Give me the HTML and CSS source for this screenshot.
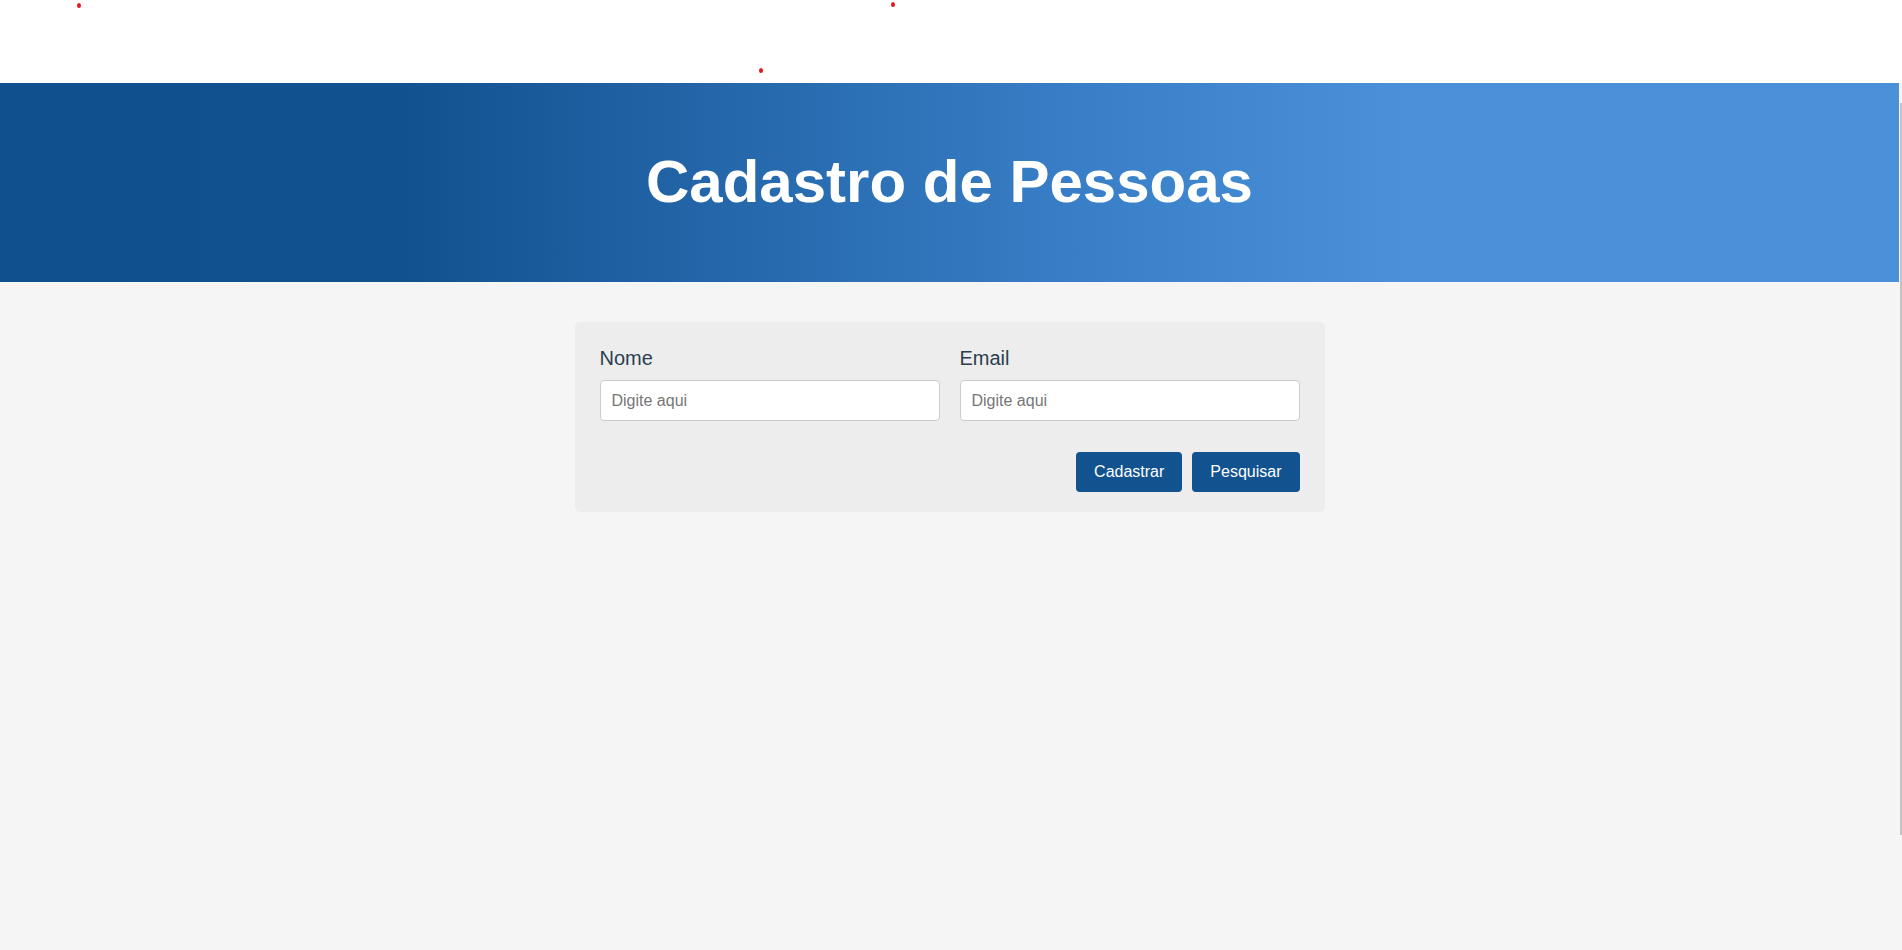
FILE: index.html
```html
<!DOCTYPE html>
<html lang="pt-BR">
<head>
<meta charset="utf-8">
<title>Cadastro de Pessoas</title>
<link rel="stylesheet" href="styles.css">
</head>
<body>
<div class="topbar">
  <span class="dot dot-a"></span>
  <span class="dot dot-b"></span>
  <span class="dot dot-c"></span>
</div>
<header class="hero">
  <h1>Cadastro de Pessoas</h1>
</header>
<main class="content">
  <form class="card">
    <div class="fields">
      <div class="field">
        <label for="nome">Nome</label>
        <input id="nome" type="text" placeholder="Digite aqui">
      </div>
      <div class="field">
        <label for="email">Email</label>
        <input id="email" type="text" placeholder="Digite aqui">
      </div>
    </div>
    <div class="actions">
      <button type="button" class="btn">Cadastrar</button>
      <button type="button" class="btn">Pesquisar</button>
    </div>
  </form>
</main>
<div class="scroll-thumb"></div>
</body>
</html>
```
FILE: styles.css
```css
html, body {
  margin: 0;
  padding: 0;
}
body {
  background: #f5f5f5;
  font-family: "Liberation Sans", Arial, sans-serif;
  min-height: 950px;
  position: relative;
}
.topbar {
  height: 83px;
  background: #ffffff;
  position: relative;
}
.dot {
  position: absolute;
  width: 4px;
  height: 5px;
  border-radius: 50%;
  background: #e8141e;
}
.dot-a { left: 77px; top: 3px; }
.dot-b { left: 891px; top: 2px; }
.dot-c { left: 759px; top: 68px; }
.hero {
  margin-right: 3px;
  height: 199px;
  background: linear-gradient(90deg, #10508f 0%, #11518f 21%, #3a80c9 58%, #4a91da 74%, #4a91da 100%);
  display: flex;
  align-items: center;
  justify-content: center;
}
.hero h1 {
  margin: 0;
  color: #ffffff;
  font-size: 60px;
  font-weight: bold;
  padding-bottom: 2px;
}
.content {
  display: flex;
  justify-content: center;
  padding-top: 40px;
  margin-right: 3px;
}
.card {
  width: 750px;
  box-sizing: border-box;
  background: #ededed;
  border-radius: 5px;
  padding: 25px 25px 20px;
}
.fields {
  display: grid;
  grid-template-columns: 1fr 1fr;
  column-gap: 20px;
}
.field {
  display: flex;
  flex-direction: column;
}
.field label {
  font-size: 20px;
  line-height: 23px;
  color: #2c3e50;
  margin-bottom: 10px;
}
.field input {
  height: 41px;
  box-sizing: border-box;
  border: 1px solid #cccccc;
  border-radius: 4px;
  background: #ffffff;
  padding: 0 11px;
  font-family: "Liberation Sans", Arial, sans-serif;
  font-size: 16px;
  color: #333333;
  outline: none;
}
.field input::placeholder {
  color: #777777;
}
.actions {
  display: flex;
  justify-content: flex-end;
  gap: 10px;
  margin-top: 31px;
}
.btn {
  height: 40px;
  padding: 0 18px;
  border: none;
  border-radius: 4px;
  background: #11528f;
  color: #ffffff;
  font-family: "Liberation Sans", Arial, sans-serif;
  font-size: 16px;
  cursor: pointer;
}
.scroll-thumb {
  position: absolute;
  right: 0;
  top: 103px;
  width: 2px;
  height: 732px;
  background: #c4c4c4;
}
```
